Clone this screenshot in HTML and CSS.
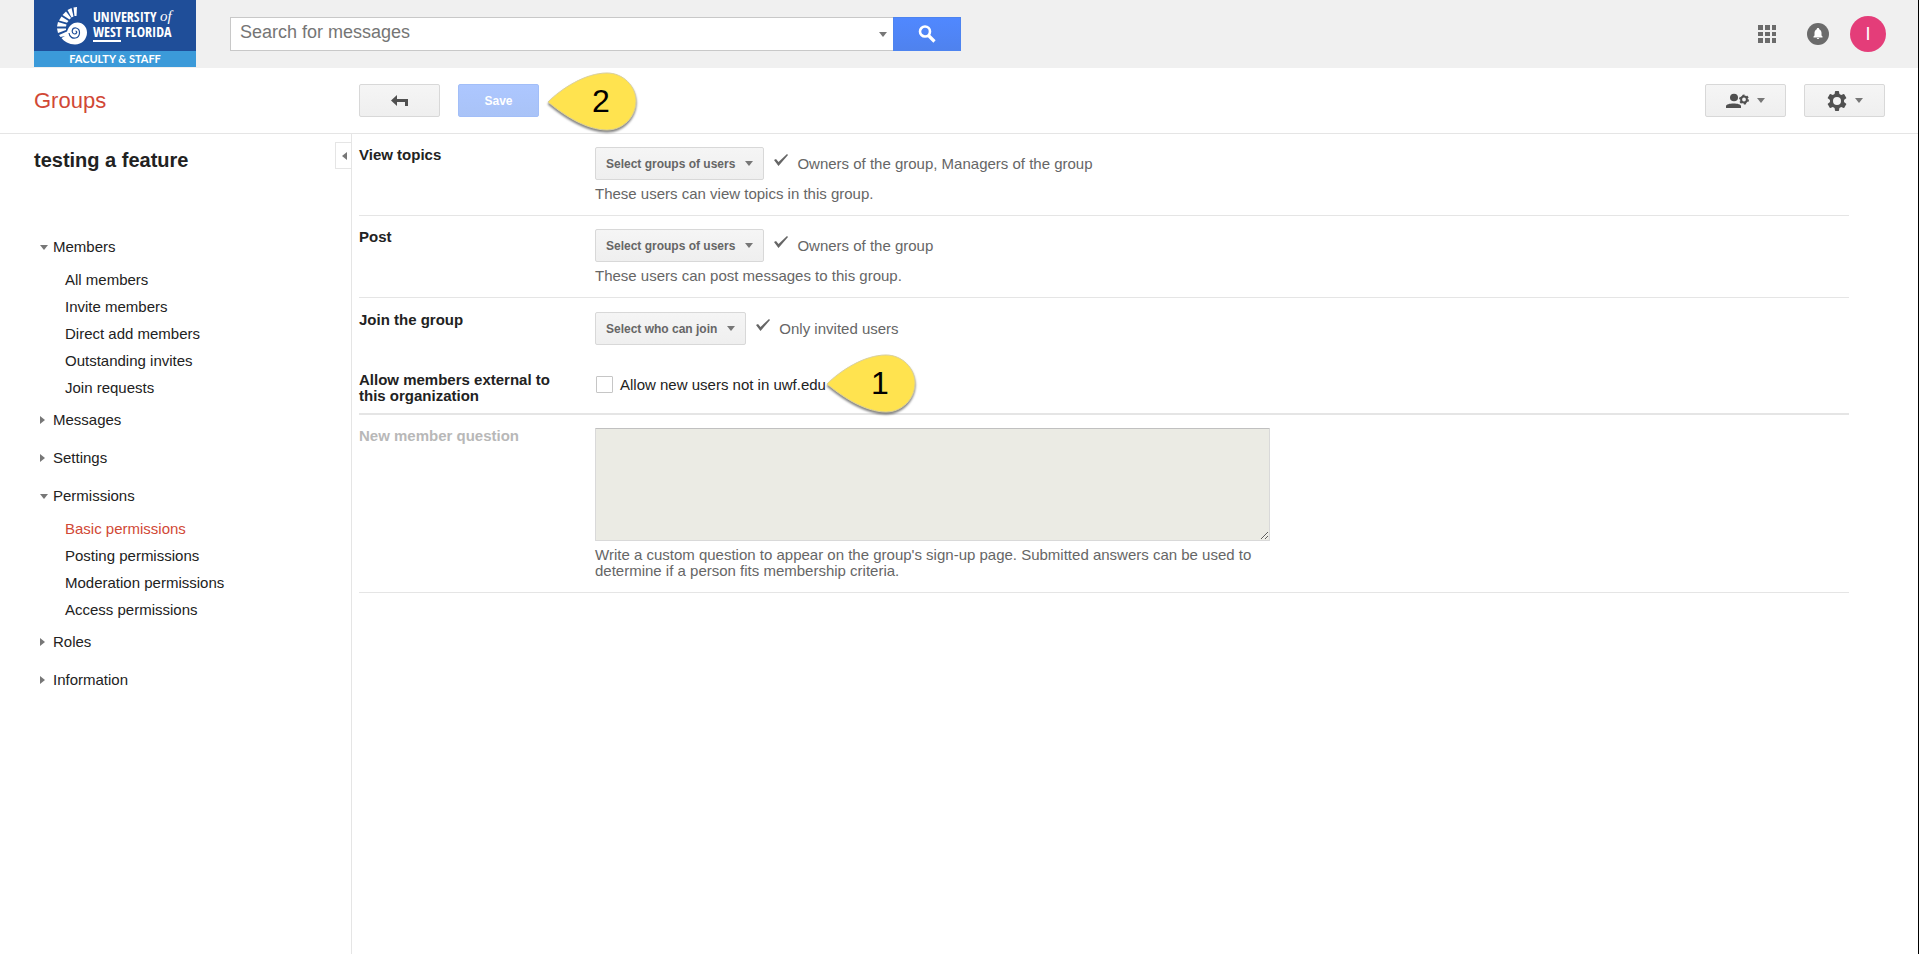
FILE: index.html
```
<!DOCTYPE html>
<html lang="en">
<head>
    <meta charset="UTF-8">
    <meta name="viewport" content="width=device-width, initial-scale=1.0">
    <title>testing a feature - Groups</title>
    <link rel="stylesheet" href="styles.css">
</head>
<body>
    <header class="topbar">
        <a class="logo" href="#" aria-label="University of West Florida, Faculty and Staff">
            <svg width="162" height="67" viewBox="0 0 162 67">
                <rect width="162" height="51" fill="#1f4e99"/>
                <rect y="51" width="162" height="16" fill="#3b9ad9"/>
                <g fill="#fff">
                    <path d="M43 7L42.500 16L40.500 16L39.500 7.500Z"/>
                    <path d="M37.500 8L39.500 16.500L37.500 17.500L33.500 10Z"/>
                    <path d="M32 11.500L37 18L35.500 19.500L28.500 15Z"/>
                    <path d="M27.500 16.500L34.500 21L33 22.800L25 20.500Z"/>
                    <path d="M24 22L32.500 24.500L32 26.500L23 26.500Z"/>
                    <path d="M23 28.500L32 28.500L32 30L24 33Z"/>
                    <path d="M25 35L33 31.500C35 25.500 39 22.500 43.500 22.500C49 22.500 53 27 53 32.500C53 39 48 44.500 41 44.500C35 44.500 30 41.500 27.500 38L31 36L26.500 37Z"/>
                </g>
                <path d="M35 33C35.500 37.500 39 38.500 41.500 38C46.500 37 47 29 42 28C37.500 27.500 37 33.500 40.500 34C43 34 43.500 31 41.500 31" fill="none" stroke="#1f4e99" stroke-width="1.200"/>
                <text class="logo-name" x="59" y="22">UNIVERSITY</text>
                <text class="logo-of" x="126" y="21">of</text>
                <text class="logo-name" x="59" y="37">WEST FLORIDA</text>
                <rect x="59" y="40" width="28" height="2" fill="#fff"/>
                <text class="logo-unit" x="81" y="63" text-anchor="middle">FACULTY &amp; STAFF</text>
            </svg>
        </a>
        <form class="search" role="search">
            <div class="search-box">
                <input class="search-input" type="text" placeholder="Search for messages" aria-label="Search for messages">
                <button class="search-more" type="button" aria-label="Search options"><span class="caret"></span></button>
            </div>
            <button class="search-btn" type="button" aria-label="Search">
                <svg width="18" height="18" viewBox="0 0 18 18" fill="none" stroke="#fff">
                    <circle cx="7" cy="6.500" r="5" stroke-width="2.600"/>
                    <path d="M10.500 10.500L16.500 16.500" stroke-width="3.200"/>
                </svg>
            </button>
        </form>
        <div class="account">
            <button class="icon-btn" type="button" aria-label="Apps">
                <svg width="20" height="20" viewBox="0 0 20 20" fill="#6b6b6b">
                    <path d="M1 1h5v5h-5zM8 1h5v5h-5zM15 1h4v5h-4zM1 8h5v4h-5zM8 8h5v4h-5zM15 8h4v4h-4zM1 14h5v5h-5zM8 14h5v5h-5zM15 14h4v5h-4z"/>
                </svg>
            </button>
            <button class="icon-btn" type="button" aria-label="Notifications">
                <svg width="22" height="22" viewBox="0 0 22 22">
                    <circle cx="11" cy="11" r="11" fill="#6b6b6b"/>
                    <path d="M11 5C12 5 12.200 5.600 12.200 6.200C14 7 14.500 8.500 14.500 10V12.500L15.500 13.500V14.500H6.500V13.500L7.500 12.500V10C7.500 8.500 8 7 9.800 6.200C9.800 5.600 10 5 11 5ZM9.800 15H12.200C12 16.300 10 16.300 9.800 15Z" fill="#fff"/>
                </svg>
            </button>
            <button class="avatar" type="button">I</button>
        </div>
    </header>

    <div class="toolbar">
        <a class="brand" href="#">Groups</a>
        <div class="actions">
            <button class="btn" type="button" aria-label="Back">
                <svg width="18" height="14" viewBox="0 0 18 14" fill="#505050">
                    <path d="M0 6.500L6 1V5H17V12H14V8H6V12Z"/>
                </svg>
            </button>
            <div class="marked">
                <button class="btn btn-save" type="button">Save</button>
                <div class="marker marker-save">
                    <svg class="marker-shape" width="90" height="60" viewBox="0 0 90 60"><path d="M1 30C14 17 38 1 60 1C76 1 89 14 89 29C89 45 76 58 60 58C38 58 14 41 1 30Z"/></svg>
                    <span class="marker-num">2</span>
                </div>
            </div>
        </div>
        <div class="tools">
            <button class="btn btn-tool" type="button" aria-label="Member settings">
                <svg width="23" height="16" viewBox="0 0 23 16">
                    <ellipse cx="8" cy="4.500" rx="4" ry="3.800" fill="#505050"/>
                    <path d="M0 15V13C0 9.500 15 9.500 15 13V15Z" fill="#505050"/>
                    <g fill="none" stroke="#505050">
                        <circle cx="18" cy="6.500" r="2.900" stroke-width="2"/>
                        <circle cx="18" cy="6.500" r="4.200" stroke-width="1.600" stroke-dasharray="2.200 2.198"/>
                    </g>
                </svg>
                <span class="caret"></span>
            </button>
            <button class="btn btn-tool" type="button" aria-label="Settings">
                <svg width="20" height="20" viewBox="0 0 24 24" fill="#505050">
                    <path d="M20.400 13.200c.1-.4.100-.8.100-1.200s0-.8-.1-1.200l2.600-2a.6.600 0 0 0 .1-.8l-2.400-4.200a.6.600 0 0 0-.7-.3l-3 1.200a9 9 0 0 0-2.100-1.200L14.400.5a.6.600 0 0 0-.6-.5h-3.600a.6.600 0 0 0-.6.500l-.5 3a9 9 0 0 0-2.100 1.200l-3-1.200a.6.600 0 0 0-.7.300L.9 8a.6.600 0 0 0 .1.800l2.600 2a9 9 0 0 0 0 2.400l-2.600 2a.6.600 0 0 0-.1.800l2.400 4.200c.1.300.4.400.7.300l3-1.200a9 9 0 0 0 2.100 1.200l.5 3c0 .3.300.5.600.5h3.600c.3 0 .6-.2.600-.5l.5-3a9 9 0 0 0 2.100-1.200l3 1.200c.3.100.6 0 .7-.3l2.400-4.200a.6.600 0 0 0-.1-.8ZM12 16.800a4.800 4.800 0 1 1 0-9.600 4.800 4.800 0 0 1 0 9.600Z"/>
                </svg>
                <span class="caret"></span>
            </button>
        </div>
    </div>

    <div class="page">
        <aside class="sidebar">
            <button class="collapse" type="button" aria-label="Collapse sidebar"><span class="arrow-left"></span></button>
            <h1 class="group-name">testing a feature</h1>
            <nav class="nav">
                <a class="nav-head" href="#"><span class="nav-icon"><span class="caret"></span></span>Members</a>
                <ul class="nav-list">
                    <li><a href="#">All members</a></li>
                    <li><a href="#">Invite members</a></li>
                    <li><a href="#">Direct add members</a></li>
                    <li><a href="#">Outstanding invites</a></li>
                    <li><a href="#">Join requests</a></li>
                </ul>
                <a class="nav-head" href="#"><span class="nav-icon"><span class="arrow-right"></span></span>Messages</a>
                <a class="nav-head" href="#"><span class="nav-icon"><span class="arrow-right"></span></span>Settings</a>
                <a class="nav-head" href="#"><span class="nav-icon"><span class="caret"></span></span>Permissions</a>
                <ul class="nav-list">
                    <li><a class="active" href="#">Basic permissions</a></li>
                    <li><a href="#">Posting permissions</a></li>
                    <li><a href="#">Moderation permissions</a></li>
                    <li><a href="#">Access permissions</a></li>
                </ul>
                <a class="nav-head" href="#"><span class="nav-icon"><span class="arrow-right"></span></span>Roles</a>
                <a class="nav-head" href="#"><span class="nav-icon"><span class="arrow-right"></span></span>Information</a>
            </nav>
        </aside>

        <main class="content">
            <section class="row">
                <h2 class="row-label">View topics</h2>
                <div class="row-body">
                    <div class="choice">
                        <button class="btn btn-select" type="button">Select groups of users<span class="caret"></span></button>
                        <svg class="check" width="16" height="14" viewBox="0 0 16 14"><path d="M1 7L3 6L5.500 9L14 1L15 2L5.500 13Z"/></svg>
                        <span>Owners of the group, Managers of the group</span>
                    </div>
                    <p class="help">These users can view topics in this group.</p>
                </div>
            </section>
            <section class="row">
                <h2 class="row-label">Post</h2>
                <div class="row-body">
                    <div class="choice">
                        <button class="btn btn-select" type="button">Select groups of users<span class="caret"></span></button>
                        <svg class="check" width="16" height="14" viewBox="0 0 16 14"><path d="M1 7L3 6L5.500 9L14 1L15 2L5.500 13Z"/></svg>
                        <span>Owners of the group</span>
                    </div>
                    <p class="help">These users can post messages to this group.</p>
                </div>
            </section>
            <section class="row row-open">
                <h2 class="row-label">Join the group</h2>
                <div class="row-body">
                    <div class="choice">
                        <button class="btn btn-select" type="button">Select who can join<span class="caret"></span></button>
                        <svg class="check" width="16" height="14" viewBox="0 0 16 14"><path d="M1 7L3 6L5.500 9L14 1L15 2L5.500 13Z"/></svg>
                        <span>Only invited users</span>
                    </div>
                </div>
            </section>
            <section class="row row-external">
                <h2 class="row-label">Allow members external to this organization</h2>
                <div class="row-body">
                    <div class="marked">
                        <input class="box" type="checkbox" id="external">
                        <label for="external">Allow new users not in uwf.edu</label>
                        <div class="marker marker-external">
                            <svg class="marker-shape" width="90" height="60" viewBox="0 0 90 60"><path d="M1 30C14 17 38 1 60 1C76 1 89 14 89 29C89 45 76 58 60 58C38 58 14 41 1 30Z"/></svg>
                            <span class="marker-num">1</span>
                        </div>
                    </div>
                </div>
            </section>
            <section class="row">
                <label class="row-label disabled" for="question">New member question</label>
                <div class="row-body">
                    <textarea class="question" id="question" disabled></textarea>
                    <p class="help">Write a custom question to appear on the group's sign-up page. Submitted answers can be used to determine if a person fits membership criteria.</p>
                </div>
            </section>
        </main>
    </div>
</body>
</html>
```
FILE: styles.css
```
* { box-sizing: border-box; }
body { margin: 0; min-height: 100vh; display: flex; flex-direction: column; border-right: 1px solid #000; background: #fff; color: #222; font: 15px/16px "Liberation Sans", Arial, sans-serif; }
a { color: inherit; text-decoration: none; }
button { font-family: inherit; cursor: pointer; }
h1, h2, p, ul { margin: 0; padding: 0; }
svg { display: block; }

.caret { border: 4px solid transparent; border-top: 5px solid #777; border-bottom: 0; }
.arrow-right { border: 4px solid transparent; border-left: 5px solid #777; border-right: 0; }
.arrow-left { border: 4px solid transparent; border-right: 5px solid #777; border-left: 0; }

/* top bar */
.topbar { display: flex; height: 68px; padding-left: 34px; padding-right: 32px; background: #f0f0f0; }
.logo-name { font: bold 14px "Liberation Sans Narrow", "Open Sans Condensed", "Liberation Sans", sans-serif; fill: #fff; }
.logo-of { font: italic 15px "Liberation Serif", serif; fill: #fff; }
.logo-unit { font: bold 11px Lato, sans-serif; fill: #fff; }
.search { display: flex; align-self: center; flex: 0 1 731px; height: 34px; margin-left: 34px; }
.search-box { display: flex; flex: 1; border: 1px solid #c8c8c8; border-right: 0; background: #fff; }
.search-input { flex: 1; min-width: 0; padding: 0 0 3px 9px; border: 0; outline: 0; background: none; font: 18px "Liberation Sans", Arial, sans-serif; }
.search-input::placeholder { color: #757575; }
.search-more { display: flex; align-items: center; padding: 0 6px; border: 0; background: none; }
.search-btn { display: flex; align-items: center; justify-content: center; width: 68px; padding: 0; border: 1px solid #4d84f0; background: linear-gradient(#5088ff, #4f82ee); }
.account { display: flex; align-items: center; gap: 24px; margin-left: auto; }
.icon-btn { padding: 0; border: 0; background: none; }
.icon-btn + .icon-btn { margin-left: 6px; }
.avatar { width: 36px; height: 36px; padding: 0; border: 0; border-radius: 50%; background: #e43d79; color: #fff; font-size: 18px; margin-left: -3px; }

/* action bar */
.toolbar { display: flex; align-items: center; height: 66px; padding: 0 33px 0 34px; border-bottom: 1px solid #e5e5e5; }
.brand { width: 325px; color: #d14836; font-size: 22px; line-height: 28px; }
.actions { display: flex; gap: 18px; }
.tools { display: flex; gap: 18px; margin-left: auto; }
.btn { display: flex; align-items: center; justify-content: center; min-width: 81px; height: 33px; padding: 0; border: 1px solid #d8d8d8; border-radius: 2px; background: linear-gradient(#f5f5f5, #efefef); color: #555; font-size: 12px; font-weight: bold; }
.btn-save { border-color: #a2bef8; background: linear-gradient(#adc7ff, #a9c3f7); color: #fff; }
.btn-tool { gap: 8px; }

/* numbered callouts */
.marked { position: relative; display: flex; align-items: center; }
.marker { position: absolute; width: 90px; height: 60px; }
.marker-save { left: 89px; top: -12px; }
.marker-external { left: 231px; top: -18px; }
.marker-shape { position: absolute; overflow: visible; fill: #ffe34f; stroke: #d9cf9b; filter: drop-shadow(0 2px 1px rgba(0, 0, 0, 0.5)); }
.marker-num { position: absolute; inset: 0 0 0 18px; color: #000; font: 32px/58px "Liberation Sans", Arial, sans-serif; text-align: center; }

/* sidebar */
.page { display: flex; flex: 1; }
.sidebar { position: relative; flex: none; width: 352px; padding: 12px 20px 0 34px; border-right: 1px solid #e5e5e5; }
.group-name { margin-bottom: 54px; font-size: 20px; line-height: 28px; }
.collapse { position: absolute; top: 8px; right: 0; display: flex; align-items: center; justify-content: flex-end; width: 16px; height: 27px; padding: 0 4px; border: 1px solid #e5e5e5; border-right: 0; background: #fff; }
.nav-head { display: flex; align-items: center; height: 38px; }
.nav-icon { display: flex; width: 19px; padding-left: 6px; }
.nav-list { padding-left: 31px; list-style: none; line-height: 27px; }
.nav-list .active { color: #d14836; }

/* settings */
.content { flex: 1; padding: 0 69px 0 7px; }
.row { display: flex; padding: 13px 0; border-bottom: 1px solid #e5e5e5; }
.row-label { flex: none; width: 236px; padding-right: 36px; font-size: 15px; font-weight: bold; line-height: 16px; }
.row-label.disabled { color: #b8b8b8; }
.row-body { flex: 1; max-width: 675px; }
.choice { display: flex; align-items: center; color: #666; }
.btn-select { gap: 10px; margin-right: 9px; padding: 0 10px; color: #666; }
.check { margin: 0 8px 8px 0; fill: #666; }
.help { margin-top: 6px; color: #666; }
.row-open { border-bottom: 0; padding: 14px 0; }
.row-external { border-bottom-width: 2px; padding: 13px 0 9px; }
.row-external .marked { padding-top: 4px; }
.box { width: 17px; height: 17px; margin: 0 7px 0 1px; appearance: none; border: 1px solid #c6c6c6; border-radius: 1px; background: #fff; }
.question { display: block; width: 100%; height: 113px; border: 1px solid #d9d9d9; border-top-color: #c0c0c0; border-radius: 1px; background: #ebebe4; resize: both; }
```
